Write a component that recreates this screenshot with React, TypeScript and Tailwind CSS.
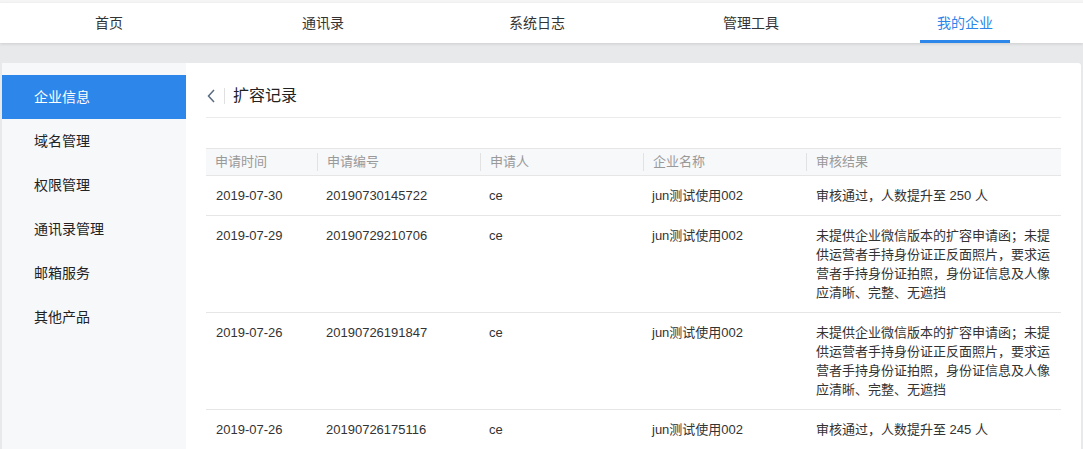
import React from 'react';

type Row = {
  date: string;
  no: string;
  applicant: string;
  company: string;
  result: string;
};

const navItems = ['首页', '通讯录', '系统日志', '管理工具', '我的企业'];
const sideItems = ['企业信息', '域名管理', '权限管理', '通讯录管理', '邮箱服务', '其他产品'];

const rejected =
  '未提供企业微信版本的扩容申请函；未提供运营者手持身份证正反面照片，要求运营者手持身份证拍照，身份证信息及人像应清晰、完整、无遮挡';

const rows: Row[] = [
  { date: '2019-07-30', no: '20190730145722', applicant: 'ce', company: 'jun测试使用002', result: '审核通过，人数提升至 250 人' },
  { date: '2019-07-29', no: '20190729210706', applicant: 'ce', company: 'jun测试使用002', result: rejected },
  { date: '2019-07-26', no: '20190726191847', applicant: 'ce', company: 'jun测试使用002', result: rejected },
  { date: '2019-07-26', no: '20190726175116', applicant: 'ce', company: 'jun测试使用002', result: '审核通过，人数提升至 245 人' }
];

const headers = ['申请时间', '申请编号', '申请人', '企业名称', '审核结果'];
const colWidths = ['w-[111px]', 'w-[163px]', 'w-[163px]', 'w-[163px]', 'flex-1'];

const App: React.FC = () => {
  return (
    <div
      className="min-h-[449px] bg-[#e8e9eb] text-[#333]"
      style={{ fontFamily: '"Liberation Sans", "Noto Sans CJK SC", sans-serif' }}
    >
      {/* Top nav */}
      <div className="h-[3px] bg-[#f5f5f5]" />
      <div className="flex h-10 bg-white px-[2px] shadow-[0_1px_3px_rgba(0,0,0,0.12)]">
        {navItems.map((item, i) => {
          const active = i === navItems.length - 1;
          return (
            <div key={item} className="flex w-[214px] justify-center">
              <div
                className={
                  active
                    ? 'flex w-[90px] justify-center border-b-[3px] border-[#2d86ea] pt-[10px] text-sm text-[#2d86ea]'
                    : 'flex justify-center pt-[10px] text-sm text-[#333]'
                }
              >
                {item}
              </div>
            </div>
          );
        })}
      </div>

      {/* Body */}
      <div className="pl-[2px] pr-[2px] pt-5">
        <div className="flex min-h-[386px] overflow-hidden rounded-tr-[3px] bg-white">
          {/* Sidebar */}
          <div className="w-[184px] bg-[#f7f8fa] pt-3">
            {sideItems.map((item, i) => (
              <div
                key={item}
                className={
                  i === 0
                    ? 'flex h-11 items-center bg-[#2d86ea] pl-8 text-sm text-white'
                    : 'flex h-11 items-center pl-8 text-sm text-[#222]'
                }
              >
                {item}
              </div>
            ))}
          </div>

          {/* Content */}
          <div className="flex-1 px-5 pt-3">
            <div className="flex h-[43px] items-center border-b border-[#ebebeb]">
              <svg width="10" height="16" viewBox="0 0 10 16">
                <path d="M8 2 L2.5 8 L8 14" fill="none" stroke="#5b6b80" strokeWidth="1.5" />
              </svg>
              <div className="mx-[8px] h-[16px] w-px bg-[#e0e0e0]" />
              <div className="text-base text-[#222]">扩容记录</div>
            </div>

            <div className="mt-[30px] text-[13px]">
              <div className="flex h-[28px] items-center border-y border-[#e6e6e6] bg-[#f7f8fa] text-[#999]">
                {headers.map((h, i) => (
                  <div
                    key={h}
                    className={`${colWidths[i]} ${i > 0 ? 'border-l border-[#e2e2e2]' : ''} flex h-[18px] items-center pl-[9px]`}
                  >
                    {h}
                  </div>
                ))}
              </div>
              {rows.map((r, idx) => (
                <div key={idx} className="flex border-b border-[#e6e6e6] leading-[19px]">
                  <div className="w-[111px] py-[10px] pl-[10px]">{r.date}</div>
                  <div className="w-[163px] py-[10px] pl-[9px]">{r.no}</div>
                  <div className="w-[163px] py-[10px] pl-[9px]">{r.applicant}</div>
                  <div className="w-[163px] py-[10px] pl-[9px]">{r.company}</div>
                  <div className="flex-1 py-[10px] pl-[10px] pr-[10px]">{r.result}</div>
                </div>
              ))}
            </div>
          </div>
        </div>
      </div>
    </div>
  );
};

export default App;
